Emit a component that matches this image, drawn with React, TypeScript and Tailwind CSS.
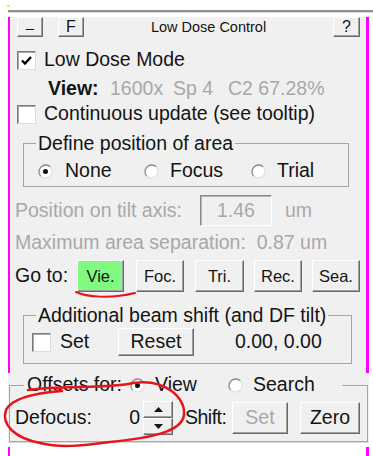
import type { ReactNode } from 'react'

const raised =
  'flex items-center justify-center border border-t-white border-l-white border-b-[#696969] border-r-[#696969] shadow-[inset_-1px_-1px_0_#a0a0a0]'

function Btn({
  children,
  className = '',
}: {
  children?: ReactNode
  className?: string
}) {
  return <div className={`${raised} ${className}`}>{children}</div>
}

function Check({ checked = false }: { checked?: boolean }) {
  return (
    <span className="flex h-[19px] w-[19px] shrink-0 items-center justify-center border border-t-[#7a7a7a] border-l-[#7a7a7a] border-b-[#dcdcdc] border-r-[#dcdcdc] bg-white shadow-[inset_1px_1px_0_#a8a8a8]">
      {checked && (
        <svg width="13" height="13" viewBox="0 0 13 13">
          <path d="M2 6.5 L5 9.5 L11 3" fill="none" stroke="#000" strokeWidth="2.4" />
        </svg>
      )}
    </span>
  )
}

function Radio({ checked = false }: { checked?: boolean }) {
  return (
    <svg width="15" height="15" viewBox="0 0 15 15" className="shrink-0">
      <circle cx="7.5" cy="7.5" r="6.8" fill="#fff" />
      <path d="M2.7 12.3 A6.8 6.8 0 0 1 12.3 2.7" fill="none" stroke="#8c8c8c" strokeWidth="1.3" />
      <path d="M12.3 2.7 A6.8 6.8 0 0 1 2.7 12.3" fill="none" stroke="#e2e2e2" strokeWidth="1.3" />
      {checked && <circle cx="7.5" cy="7.5" r="2.5" fill="#111" />}
    </svg>
  )
}

export default function App() {
  return (
    <div className="relative h-[456px] w-[373px] overflow-hidden bg-white font-['Liberation_Sans',Arial,sans-serif] text-[19.5px] leading-none text-[#141414]">
      <div className="h-[10px] pl-[7px] pt-[5px]">
        <div className="h-[2px] w-[3px] bg-[#f5e642]" />
      </div>
      <div className="ml-[8px] h-[3px] border-t-2 border-[#8e8e8e] bg-[#d9d9d9]" />

      {/* main panel */}
      <div className="ml-[8px] w-[361px] border-l-2 border-r-[3px] border-[#ff00ff] bg-[#f0f0f0] pb-[9px]">
        <div className="mt-[4px] flex h-[20px] items-center pl-[7px] pr-[6px]">
          <Btn className="h-[20px] w-[26px] text-[15px]">–</Btn>
          <Btn className="ml-[15px] h-[20px] w-[26px] text-[16px]">F</Btn>
          <span className="flex-1 text-center text-[14.5px]">Low Dose Control</span>
          <Btn className="h-[20px] w-[27px] text-[16px]">?</Btn>
        </div>

        <div className="mt-[12px] flex h-[22px] items-center pl-[7px]">
          <Check checked />
          <span className="ml-[8px]">Low Dose Mode</span>
        </div>

        <div className="mt-[7px] flex h-[22px] items-center pl-[38px] text-[#a8a8a8]">
          <span className="w-[62px] font-bold text-[#141414]">View:</span>
          <span className="w-[63px]">1600x</span>
          <span className="w-[55px]">Sp 4</span>
          <span>C2 67.28%</span>
        </div>

        <div className="mt-[3px] flex h-[22px] items-center pl-[7px]">
          <Check />
          <span className="ml-[8px]">Continuous update (see tooltip)</span>
        </div>

        <fieldset className="ml-[13px] mt-[7px] w-[326px] border border-[#a5a5a5] pb-[4px]">
          <legend className="ml-[12px] h-[22px] px-[2px] leading-[22px]">Define position of area</legend>
          <div className="mt-[6px] flex h-[22px] items-center pl-[14px]">
            <div className="flex w-[106px] items-center">
              <Radio checked />
              <span className="ml-[12px]">None</span>
            </div>
            <div className="flex w-[107px] items-center">
              <Radio />
              <span className="ml-[11px]">Focus</span>
            </div>
            <div className="flex items-center">
              <Radio />
              <span className="ml-[11px]">Trial</span>
            </div>
          </div>
        </fieldset>

        <div className="mt-[8px] flex h-[31px] items-center pl-[5px] text-[#a8a8a8]">
          <span className="w-[185px]">Position on tilt axis:</span>
          <span className="flex h-[31px] w-[72px] items-center justify-center border border-t-[#8a8a8a] border-l-[#8a8a8a] border-b-white border-r-white shadow-[inset_1px_1px_0_#b4b4b4]">
            1.46
          </span>
          <span className="ml-[13px]">um</span>
        </div>

        <div className="mt-[6px] flex h-[22px] items-center whitespace-pre pl-[5px] text-[#a8a8a8]">
          Maximum area separation:  0.87 um
        </div>

        <div className="mt-[6px] flex h-[32px] items-center pl-[5px] text-[16.5px]">
          <span className="w-[62px] text-[19.5px]">Go to:</span>
          <Btn className="h-[32px] w-[47px] bg-[#80fa80]">Vie.</Btn>
          <Btn className="ml-[12px] h-[32px] w-[48px]">Foc.</Btn>
          <Btn className="ml-[11px] h-[32px] w-[49px]">Tri.</Btn>
          <Btn className="ml-[10px] h-[32px] w-[48px]">Rec.</Btn>
          <Btn className="ml-[10px] h-[32px] w-[48px]">Sea.</Btn>
        </div>

        <fieldset className="ml-[13px] mt-[12px] w-[329px] border border-[#a5a5a5] pb-[7px]">
          <legend className="ml-[12px] h-[22px] px-[2px] leading-[22px]">Additional beam shift (and DF tilt)</legend>
          <div className="mt-[2px] flex h-[28px] items-center pl-[8px]">
            <Check />
            <span className="ml-[9px] w-[58px]">Set</span>
            <Btn className="h-[28px] w-[76px]">Reset</Btn>
            <span className="ml-[41px]">0.00, 0.00</span>
          </div>
        </fieldset>
      </div>

      {/* offsets area */}
      <div className="ml-[8px] w-[361px] bg-[#f0f0f0] pt-[1px]">
        <fieldset className="ml-[1px] w-[359px] border border-[#a5a5a5] pb-[6px]">
          <legend className="ml-[14px] h-[22px] pl-[3px] pr-[27px]">
            <div className="flex h-[22px] items-center">
              <span className="w-[103px]">Offsets for:</span>
              <Radio checked />
              <span className="ml-[10px] w-[73px]">View</span>
              <Radio />
              <span className="ml-[10px]">Search</span>
            </div>
          </legend>
          <div className="mt-[5px] flex h-[34px] items-center pl-[5px]">
            <span className="w-[113px]">Defocus:</span>
            <span className="w-[15px] pr-[3px] text-right">0</span>
            <div className="flex h-[34px] w-[30px] flex-col">
              <Btn className="h-[17px] w-[30px]">
                <svg width="9" height="5" viewBox="0 0 9 5">
                  <path d="M0 5 L4.5 0 L9 5 Z" fill="#111" />
                </svg>
              </Btn>
              <Btn className="h-[17px] w-[30px]">
                <svg width="9" height="5" viewBox="0 0 9 5">
                  <path d="M0 0 L9 0 L4.5 5 Z" fill="#111" />
                </svg>
              </Btn>
            </div>
            <span className="ml-[12px] w-[47px] tracking-[-0.5px]">Shift:</span>
            <Btn className="h-[32px] w-[56px] text-[#a8a8a8]">Set</Btn>
            <Btn className="ml-[12px] h-[32px] w-[60px]">Zero</Btn>
          </div>
        </fieldset>
      </div>
      <div className="ml-[8px] h-[1px] w-[361px] bg-[#dadada]" />
      <div className="ml-[8px] mt-[4px] flex h-[10px] w-[361px] justify-between">
        <span className="w-[2px] bg-[#ff00ff]" />
        <span className="w-[3px] bg-[#ff00ff]" />
      </div>

      {/* red annotation marks */}
      <svg
        className="pointer-events-none absolute left-0 top-0"
        width="373"
        height="456"
        viewBox="0 0 373 456"
      >
        <path
          d="M76 292 C86 297, 110 299, 135 293"
          fill="none"
          stroke="#e8141c"
          strokeWidth="2"
          strokeLinecap="round"
        />
        <path
          d="M28 390 C60 385, 110 389, 133 383 C165 378, 186 398, 184 415 C182 432, 150 438, 110 442 C80 446, 60 448, 40 443 C15 438, 1 425, 6 410 C12 398, 35 393, 62 391"
          fill="none"
          stroke="#e8141c"
          strokeWidth="2.5"
          strokeLinecap="round"
        />
      </svg>
    </div>
  )
}
